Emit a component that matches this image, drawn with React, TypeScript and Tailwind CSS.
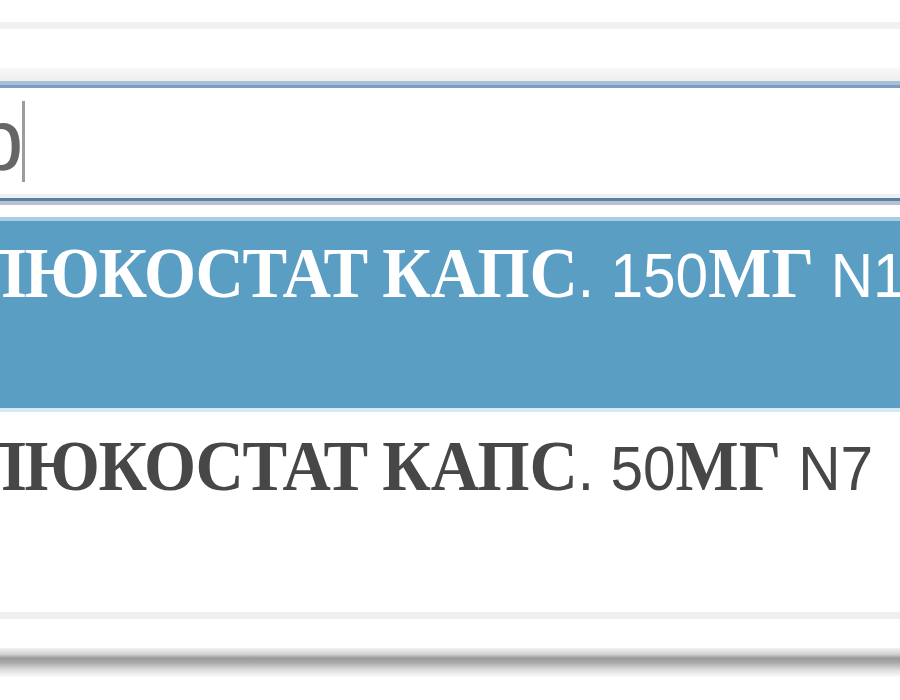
import React from 'react';

const serif = "font-['Liberation_Serif','Times_New_Roman',serif] font-bold";
const sans = "font-['Liberation_Sans',Arial,sans-serif]";

const Option: React.FC<{ dose: string; pack: string; active?: boolean }> = ({ dose, pack, active }) => (
  <div className={`whitespace-nowrap leading-[72px] ${active ? 'text-white' : 'text-[#474747]'}`}>
    <span className="inline-block origin-left scale-x-[0.93] ml-[-75px]">
      <span className={`${serif} text-[72px] tracking-[-1.5px]`}>ФЛЮКОСТАТ </span>
      <span className={`${serif} text-[72px]`}>КАПС</span>
      <span className={`${sans} text-[63px]`}>. {dose}</span>
      <span className={`${serif} text-[72px]`}>МГ </span>
      <span className={`${sans} text-[63px]`}>{pack}</span>
    </span>
  </div>
);

export default function App() {
  return (
    <div className="w-[900px] h-[700px] overflow-hidden bg-white flex flex-col">
      <div className="h-[22px] shrink-0" />
      <div className="h-[7px] shrink-0 bg-[#f1f1f1]" />
      <div className="h-[39px] shrink-0 bg-white" />
      <div className="h-[13px] shrink-0 bg-[linear-gradient(to_bottom,#f8f8f8,#eeeeee)]" />

      {/* search input */}
      <div className="shrink-0 border-t-[4px] border-[#a9bfd4]">
        <div className="border-t-[3px] border-[#7c9dc3]">
          <div className="h-[110px] bg-white flex items-center border-b-[4px] border-[#eef1f4]">
            <span className={`${sans} text-[87px] leading-none text-[#666] ml-[-25px] mb-[4px]`}>р</span>
            <span className="w-[3px] h-[81px] bg-[#9c9c9c] ml-[-1px]" />
          </div>
          <div className="h-[3px] bg-[#5a80a9]" />
          <div className="h-[4px] bg-[#b6c2cf]" />
        </div>
      </div>

      <div className="h-[12px] shrink-0 bg-white" />

      {/* suggestions */}
      <div className="shrink-0 border-t-[4px] border-[#a9cde2] bg-[#5b9ec4] h-[191px] pt-[16px]">
        <Option dose="150" pack="N1" active />
      </div>
      <div className="shrink-0 border-t-[4px] border-[#d9e9f3] h-[204px] pt-[18px]">
        <Option dose="50" pack="N7" />
      </div>
      <div className="h-[7px] shrink-0 bg-[#efefef]" />
      <div className="h-[29px] shrink-0 bg-white" />
      <div className="h-[29px] shrink-0 bg-[linear-gradient(to_bottom,#f2f2f2,#cfcfcf_22%,#9a9a9a_35%,#a8a8a8_50%,#dcdcdc_75%,#fbfbfb)]" />
      <div className="flex-1 bg-white" />
    </div>
  );
}
